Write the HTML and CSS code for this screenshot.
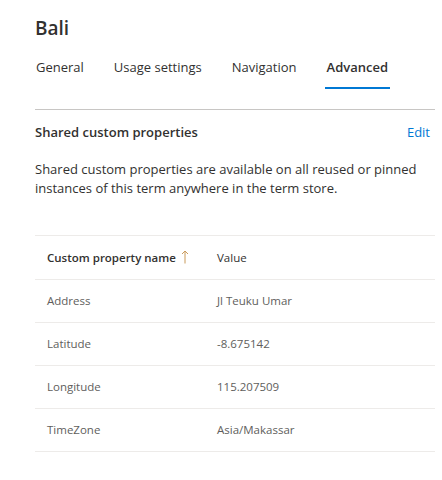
FILE: index.html
```html
<!DOCTYPE html>
<html lang="en">
<head>
    <meta charset="UTF-8">
    <meta name="viewport" content="width=device-width, initial-scale=1.0">
    <title>Bali</title>
    <link rel="stylesheet" href="styles.css">
</head>
<body>
    <div class="panel">
        <h1 class="title">Bali</h1>
        <nav class="tabs">
            <a class="tab">General</a>
            <a class="tab">Usage settings</a>
            <a class="tab">Navigation</a>
            <a class="tab active">Advanced</a>
        </nav>

        <div class="section">
            <div class="section-head">
                <h2>Shared custom properties</h2>
                <a class="edit">Edit</a>
            </div>
            <p class="desc">Shared custom properties are available on all reused or pinned instances of this term anywhere in the term store.</p>
        </div>

        <table class="props">
            <thead>
                <tr>
                    <th class="col-name sorted">Custom property name
                        <svg class="sort" width="8" height="14" viewBox="0 0 8 14">
                            <path d="M4 13.5V1M1 4l3-3 3 3" fill="none" stroke="currentColor" stroke-width="1"/>
                        </svg>
                    </th>
                    <th>Value</th>
                </tr>
            </thead>
            <tbody>
                <tr><td>Address</td><td>Jl Teuku Umar</td></tr>
                <tr><td>Latitude</td><td>-8.675142</td></tr>
                <tr><td>Longitude</td><td>115.207509</td></tr>
                <tr><td>TimeZone</td><td>Asia/Makassar</td></tr>
            </tbody>
        </table>
    </div>
</body>
</html>
```

FILE: styles.css
```css
body {
    margin: 0;
    background: #fff;
    font-family: "Segoe UI", "Open Sans", sans-serif;
    color: #323130;
}
.panel {
    width: 400px;
    padding: 14px 0 0 35px;
}
.title {
    margin: 0;
    font-size: 19px;
    font-weight: 600;
    line-height: 28px;
}
.tabs {
    display: flex;
    gap: 30px;
    margin-top: 15px;
    padding: 0 0 20px 1px;
    border-bottom: 1px solid #c8c6c4;
}
.tab {
    position: relative;
    padding-bottom: 12px;
    font-size: 13px;
    line-height: 20px;
    color: #323130;
    cursor: pointer;
}
.tab.active {
    font-weight: 600;
}
.tab.active::after {
    content: "";
    position: absolute;
    left: -2px;
    right: -2px;
    bottom: 0;
    height: 2px;
    background: #0078d4;
}
.section {
    padding-top: 12px;
}
.section-head {
    display: flex;
    justify-content: space-between;
    align-items: center;
}
.section-head h2 {
    margin: 0;
    font-size: 13px;
    font-weight: 600;
    line-height: 20px;
}
.edit {
    font-size: 13px;
    color: #0078d4;
    margin-right: 5px;
    cursor: pointer;
}
.desc {
    margin: 18px 0 0;
    font-size: 13px;
    line-height: 19px;
}
.props {
    width: 400px;
    margin-top: 37px;
    border-collapse: collapse;
    font-size: 11.5px;
}
.props th,
.props td {
    text-align: left;
    padding: 0 12px;
    border-bottom: 1px solid #edebe9;
    white-space: nowrap;
}
.props th {
    height: 43px;
    font-weight: 400;
    border-top: 1px solid #edebe9;
}
.props th.sorted {
    font-weight: 600;
}
.props td {
    height: 40px;
    padding-bottom: 2px;
    color: #605e5c;
}
.col-name {
    width: 146px;
}
.sort {
    color: #c99a5b;
    vertical-align: -2px;
    margin-left: 2px;
}
```
